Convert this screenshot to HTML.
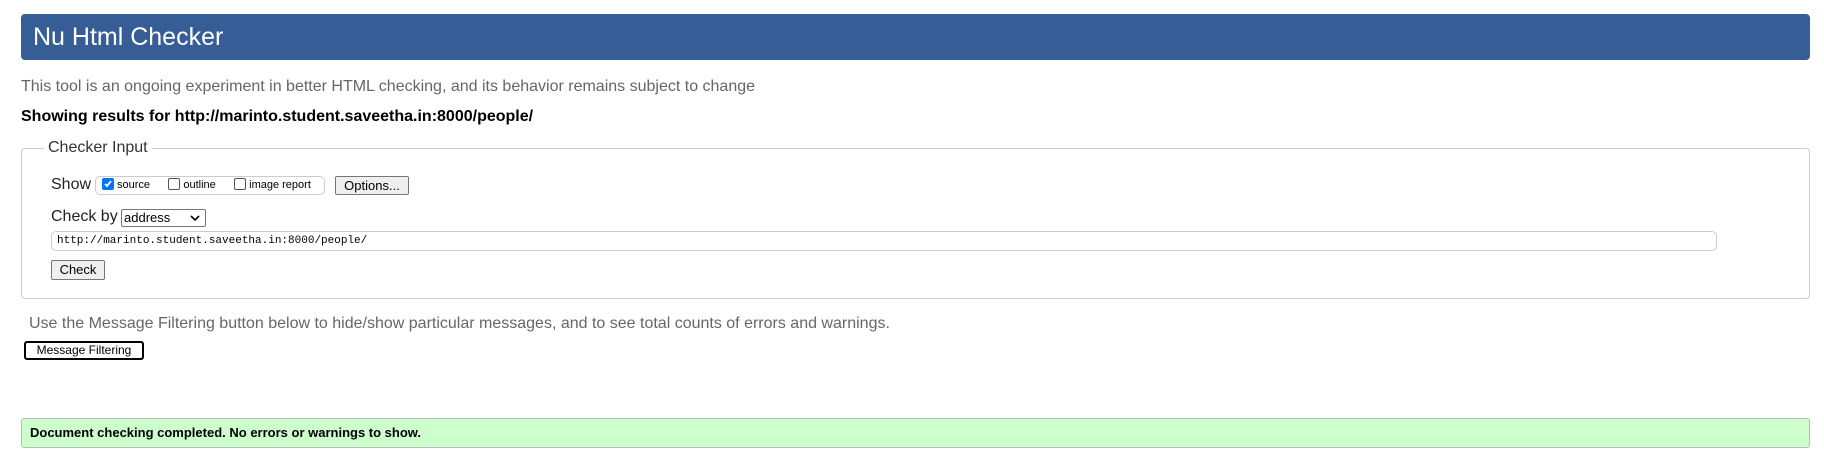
<!DOCTYPE html>
<html><head><style>
body{margin:0;width:1824px;height:457px;background:#fff;font-family:"Liberation Sans",Arial,sans-serif;position:relative;overflow:hidden}
.a{position:absolute}
#hd{left:21px;top:14px;width:1789px;height:46px;background:#365d95;border-radius:4px;color:#fff;font-size:25px;line-height:46px;padding-left:12px;box-sizing:border-box}
.g{color:#666;font-size:16px}
#fs{left:21px;top:148px;width:1789px;height:151px;border:1px solid #ccc;border-radius:4px;box-sizing:border-box}
.btn{background:#efefef;border:1px solid #767676;border-radius:2px;font-size:13px;text-align:center;box-sizing:border-box;color:#000}
.cb{display:inline-block;width:12px;height:12px;border:1px solid #555;border-radius:2px;vertical-align:-2px;margin-right:3px;box-sizing:border-box}
</style></head><body>
<div id="hd" class="a">Nu Html Checker</div>
<div class="a g" style="left:21px;top:78px">This tool is an ongoing experiment in better HTML checking, and its behavior remains subject to change</div>
<div class="a" style="left:21px;top:108px;font-size:16px;font-weight:bold;color:#000">Showing results for http://marinto.student.saveetha.in:8000/people/</div>
<div id="fs" class="a"></div>
<div class="a" style="left:44px;top:139px;background:#fff;padding:0 4px;font-size:16px;color:#333">Checker Input</div>
<div class="a" style="left:51px;top:176px;font-size:16px;color:#222">Show</div>
<div class="a" style="left:95px;top:176px;width:230px;height:19px;border:1px solid #ccc;border-radius:5px;box-sizing:border-box;font-size:11px;line-height:17px;padding-left:6px;color:#000;white-space:nowrap">
<span class="cb" style="background:#0075ff;border-color:#0075ff;position:relative"><svg width="10" height="10" style="position:absolute;left:0;top:0" viewBox="0 0 10 10"><path d="M2 5l2 2 4-5" stroke="#fff" stroke-width="1.8" fill="none"/></svg></span>source&nbsp;&nbsp;&nbsp;&nbsp;&nbsp;&nbsp;<span class="cb"></span>outline&nbsp;&nbsp;&nbsp;&nbsp;&nbsp;&nbsp;<span class="cb"></span>image report</div>
<div class="a btn" style="left:335px;top:176px;width:74px;height:19px;line-height:17px">Options...</div>
<div class="a" style="left:51px;top:208px;font-size:16px;color:#222">Check by</div>
<div class="a" style="left:121px;top:209px;width:85px;height:18px;border:1px solid #767676;border-radius:2px;box-sizing:border-box;font-size:13px;line-height:16px;padding-left:2px">address<svg class="a" style="right:5px;top:5px" width="10" height="6" viewBox="0 0 10 6"><path d="M1 1l4 4 4-4" stroke="#000" stroke-width="1.6" fill="none"/></svg></div>
<div class="a" style="left:51px;top:231px;width:1666px;height:20px;border:1px solid #ccc;border-radius:5px;box-sizing:border-box;font-family:'Liberation Mono',monospace;font-size:11px;line-height:18px;padding-left:5px">http://marinto.student.saveetha.in:8000/people/</div>
<div class="a btn" style="left:51px;top:260px;width:54px;height:20px;line-height:18px">Check</div>
<div class="a g" style="left:29px;top:315px">Use the Message Filtering button below to hide/show particular messages, and to see total counts of errors and warnings.</div>
<div class="a btn" style="left:24px;top:341px;width:120px;height:19px;line-height:15px;border:2px solid #000;border-radius:3px;background:#fff;font-size:12px">Message Filtering</div>
<div class="a" style="left:21px;top:418px;width:1789px;height:30px;background:#ccffcc;border:1px solid #bbb;border-radius:3px;box-sizing:border-box;font-size:13px;font-weight:bold;line-height:28px;padding-left:8px">Document checking completed. No errors or warnings to show.</div>
</body></html>
